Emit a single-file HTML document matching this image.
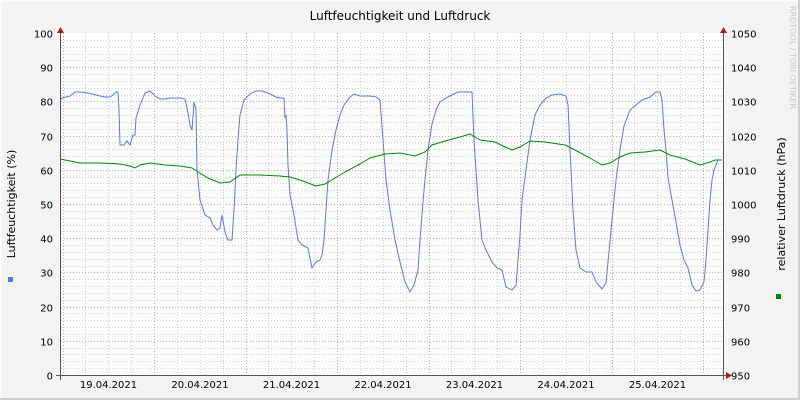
<!DOCTYPE html>
<html><head><meta charset="utf-8"><style>
html,body{margin:0;padding:0;width:800px;height:400px;overflow:hidden;background:#f3f3f3}
svg{display:block}
text{font-family:"DejaVu Sans","Liberation Sans",sans-serif;font-size:10px;fill:#000}
</style></head><body>
<svg width="800" height="400" viewBox="0 0 800 400" xmlns="http://www.w3.org/2000/svg">
<rect x="0" y="0" width="800" height="400" fill="#f3f3f3"/>
<line x1="0" y1="0.5" x2="800" y2="0.5" stroke="#fcfcfc" stroke-width="2"/>
<line x1="0.5" y1="0" x2="0.5" y2="400" stroke="#fcfcfc" stroke-width="2"/>
<line x1="0" y1="399" x2="800" y2="399" stroke="#cfcfcf" stroke-width="2"/>
<line x1="799" y1="0" x2="799" y2="400" stroke="#cfcfcf" stroke-width="2"/>
<rect x="60" y="33" width="663" height="342" fill="#ffffff"/>
<g id="grid" shape-rendering="crispEdges"></g>
<polyline fill="none" stroke="#5577ee" stroke-width="1" points="60,100 62,98 66,97 70,96 75,92 80,92 88,93 96,95 100,96 105,97 110,97 113,95 116,92 118,92 119,110 120,145 124,145 127,141 130,145 133,135 135,135 136,118 140,105 145,93 150,91 155,96 160,99 165,99 170,98 180,98 185,99 188,113 190,125 192,130 194,102 196,110 197,170 198,180 200,200 205,215 210,218 213,225 217,230 220,228 222,215 225,232 228,240 232,240 234,210 236,170 238,140 240,115 244,100 250,94 256,91 262,91 268,93 272,95 276,97 280,98 284,98 285,118 286,115 287,130 288,165 290,195 294,215 298,240 302,245 308,248 312,268 316,262 320,260 322,255 324,240 326,210 328,180 332,150 336,130 340,115 344,105 350,97 354,94 360,96 370,96 376,97 380,100 383,140 386,180 390,210 395,240 400,262 405,282 410,292 414,285 418,270 420,240 424,190 428,150 432,124 436,110 440,102 446,98 452,95 458,92 464,92 472,92 474,140 478,200 482,240 486,250 492,262 497,268 502,270 506,287 512,290 516,285 518,260 520,235 522,200 526,170 530,140 535,115 540,105 546,98 552,95 560,94 566,96 568,105 570,150 573,210 576,250 580,268 586,272 592,272 596,282 602,289 606,283 608,262 612,220 616,180 620,150 624,126 630,110 636,105 642,100 650,97 656,92 660,92 662,100 664,130 666,150 668,178 672,200 676,222 680,245 684,260 688,268 692,285 696,291 700,290 704,282 706,260 708,230 710,200 712,180 714,170 716,165 718,160 722,160"/>
<polyline fill="none" stroke="#008800" stroke-width="1" points="60,159 70,161 80,163 100,163 120,164 130,166 135,168 140,165 150,163 165,165 180,166 192,168 198,172 208,178 220,183 230,182 240,175 260,175 280,176 290,177 300,180 316,186 325,184 335,178 345,172 360,164 370,158 385,154 400,153 415,156 425,152 432,145 445,141 460,137 470,134 480,140 495,142 505,147 512,150 520,147 530,141 545,142 565,145 575,150 590,158 602,165 610,163 620,157 630,153 645,152 660,150 670,155 685,159 700,165 710,162 715,160 722,160"/>
<g shape-rendering="crispEdges" stroke="#555">
<line x1="60.5" y1="30" x2="60.5" y2="380"/>
<line x1="723.5" y1="30" x2="723.5" y2="380"/>
<line x1="56" y1="375.5" x2="726" y2="375.5"/>
</g>
<polygon points="57,33 64,33 60.5,27" fill="#a02020"/>
<polygon points="720,33 727,33 723.5,27" fill="#a02020"/>
<polygon points="726,372 726,379 732,375.5" fill="#a02020"/>
<g id="labels"></g>
<text x="400" y="20" text-anchor="middle" style="font-size:12px">Luftfeuchtigkeit und Luftdruck</text>
<text transform="translate(15,204) rotate(-90)" text-anchor="middle" style="font-size:11px">Luftfeuchtigkeit (%)</text>
<text transform="translate(785,204) rotate(-90)" text-anchor="middle" style="font-size:11px">relativer Luftdruck (hPa)</text>
<rect x="8" y="277" width="5" height="5" fill="#5577ee"/>
<rect x="776" y="294" width="5" height="5" fill="#008800"/>
<text transform="translate(790,6) rotate(90)" style="font-size:8px;fill:#c8c8c8">RRDTOOL / TOBI OETIKER</text>
</svg>
<script>
var ns="http://www.w3.org/2000/svg",g=document.getElementById("grid"),L=document.getElementById("labels");
function ln(x1,y1,x2,y2,c){var l=document.createElementNS(ns,"line");l.setAttribute("x1",x1);l.setAttribute("y1",y1);l.setAttribute("x2",x2);l.setAttribute("y2",y2);l.setAttribute("stroke",c);l.setAttribute("stroke-dasharray","1,2");g.appendChild(l);}
function tx(x,y,s,a){var t=document.createElementNS(ns,"text");t.setAttribute("x",x);t.setAttribute("y",y);t.setAttribute("text-anchor",a);t.textContent=s;L.appendChild(t);}
for(var i=0;i<=50;i++){var y=Math.round(375-i*6.84)+0.5;if(i%5==0){if(i>0&&i<50)ln(61,y,723,y,"#e0a0a0");var v=i*2;tx(53,y+4,String(v),"end");tx(731,y+4,String(950+v),"start");}else ln(61,y,723,y,"#d0d0d0");}
for(var k=-6;k<30;k++){var x=Math.round(154+k*22.875)+0.5;if(x<61||x>722)continue;ln(x,33,x,375,k%4==0?"#e0a0a0":"#d0d0d0");}
var d=["19.04.2021","20.04.2021","21.04.2021","22.04.2021","23.04.2021","24.04.2021","25.04.2021"];
for(var j=0;j<7;j++)tx(108.5+j*91.5,388,d[j],"middle");
</script>
</body></html>
